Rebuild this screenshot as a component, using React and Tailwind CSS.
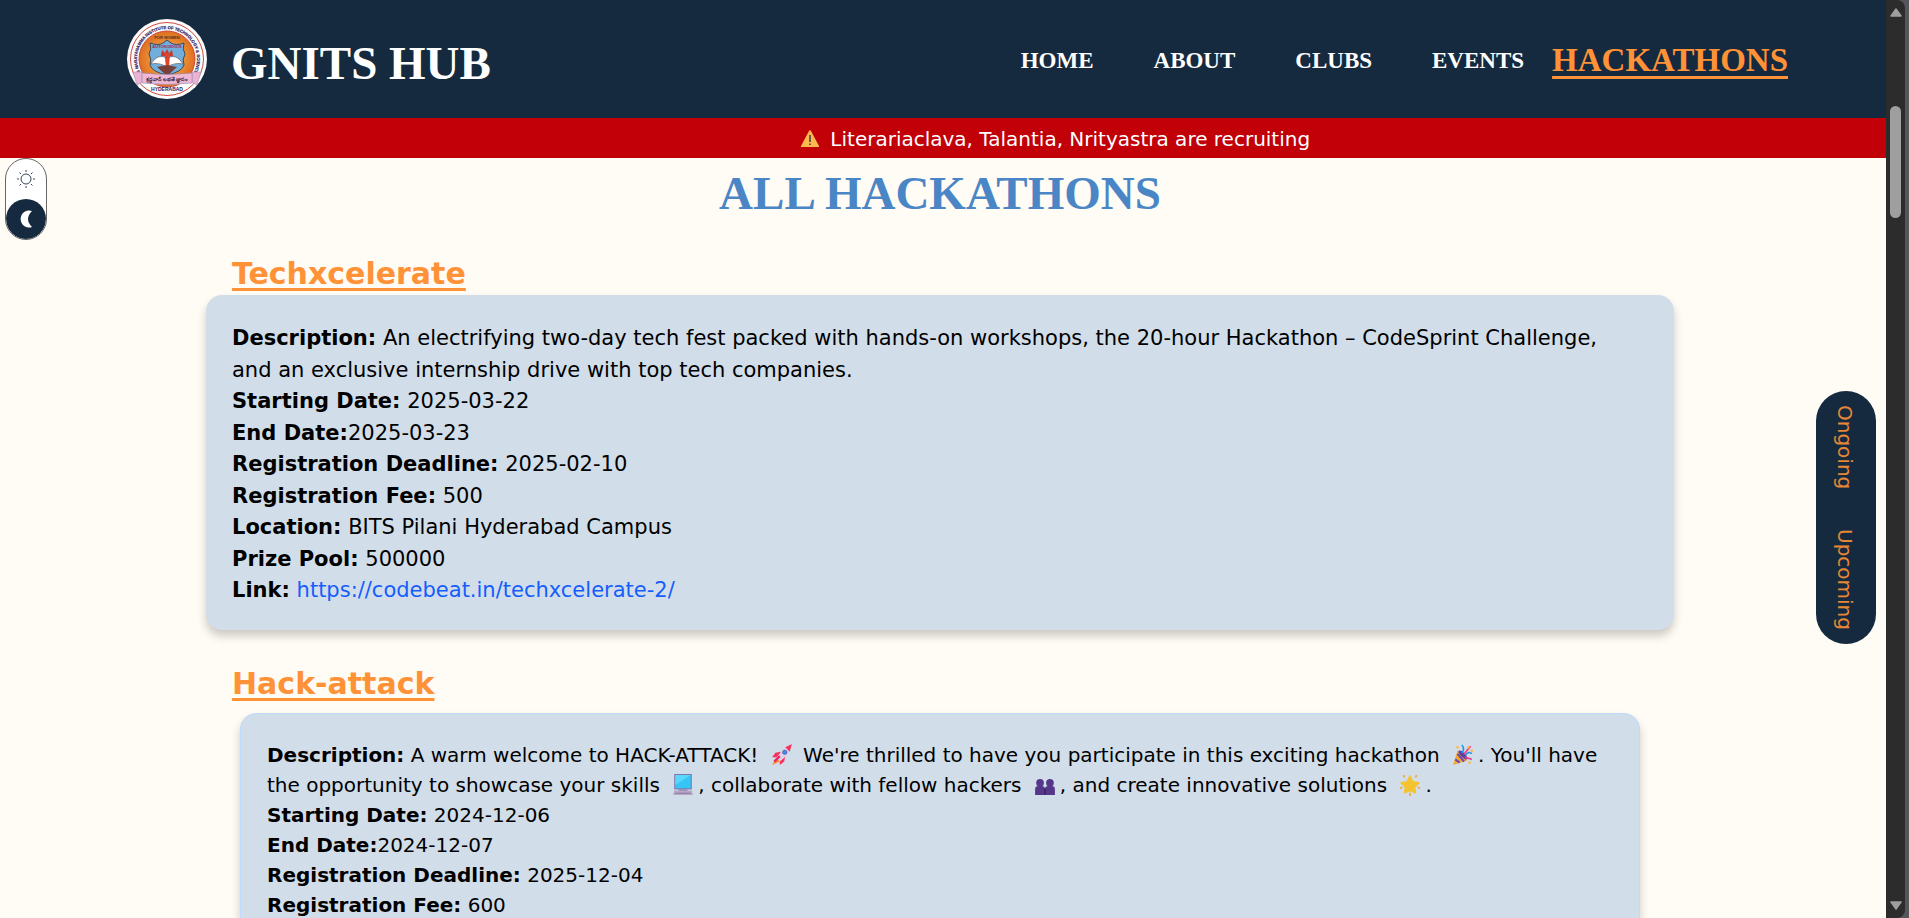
const verdana = "font-['DejaVu_Sans',sans-serif]";
const serif = "font-['Liberation_Serif',serif]";

function Crest() {
  return (
    <svg viewBox="0 0 80 80" className="size-20 shrink-0" role="img" aria-label="GNITS crest">
      <defs>
        <path id="ringTop" d="M14 55 A30 30 0 1 1 66 55" />
        <radialGradient id="core">
          <stop offset="0.500" stopColor="#f2963c" />
          <stop offset="1" stopColor="#dd6f1f" />
        </radialGradient>
      </defs>
      <circle cx="40" cy="40" r="40" fill="#fdfcfd" />
      <circle cx="40" cy="40" r="36.500" fill="none" stroke="#cf4a3e" />
      <circle cx="40" cy="40" r="28" fill="url(#core)" stroke="#cf4a3e" />
      <text fontSize="4.200" fontWeight="700" fill="#2f2160" stroke="#2f2160" strokeWidth="0.200" fontFamily="Liberation Sans Narrow, Liberation Sans, sans-serif">
        <textPath href="#ringTop" startOffset="50%" textAnchor="middle">G NARAYANAMMA INSTITUTE OF TECHNOLOGY &amp; SCIENCE</textPath>
      </text>
      <text x="40" y="20" fontSize="4" textAnchor="middle" fill="#4b3320" fontFamily="Liberation Sans, sans-serif">FOR WOMEN</text>
      <path d="M23 24 Q31 27 36 24 L40 21 L44 24 Q49 27 57 24 Q55 30 58 35 Q55 40 57 46 Q55 53 40 56 Q25 53 23 46 Q25 40 22 35 Q25 30 23 24Z" fill="#71aedb" stroke="#3b4a5c" />
      <text x="40" y="29" fontSize="4" fontWeight="700" textAnchor="middle" fill="#a12c4c" fontFamily="Liberation Sans, sans-serif">AUTONOMOUS</text>
      <path d="M34 37 35 31 38 34 40 30 42 34 45 31 46 37Z" fill="#c23a2b" />
      <path d="M24 45 Q30 34 40 39 Q50 34 56 45 Q48 43 40 48 Q32 43 24 45Z" fill="#fff" stroke="#564b50" strokeWidth="0.600" />
      <path d="M37.500 34H43L42 49H39Z" fill="#df432b" />
      <path d="M30 48 40 46 50 48 40 57Z" fill="#794039" />
      <path d="M6 53H15V63L10 66Z M74 53H65V63L70 66Z" fill="#edb1d2" stroke="#9d91b1" strokeWidth="0.600" />
      <path d="M15 54Q40 57 65 54V64Q40 67 15 64Z" fill="#f0b8d6" stroke="#8b8fb5" strokeWidth="0.600" />
      <text x="40" y="62" fontSize="5" fontWeight="700" textAnchor="middle" fill="#3d2635" fontFamily="Noto Sans, sans-serif">శ్రద్ధవాన్ లభతే జ్ఞానం</text>
      <text x="40" y="72" fontSize="5" fontWeight="700" textAnchor="middle" fill="#2f2160" fontFamily="Liberation Sans Narrow, Liberation Sans, sans-serif">HYDERABAD</text>
    </svg>
  );
}

function Emoji({ label, children }) {
  return (
    <svg viewBox="0 0 20 20" className="mr-1 ml-1.5 inline-block size-[22px] align-[-4px]" role="img" aria-label={label}>
      {children}
    </svg>
  );
}

const Warning = () => (
  <svg viewBox="0 0 20 20" className="mr-1 ml-0.5 inline-block size-5 align-[-3px]" role="img" aria-label="Warning">
    <path d="M10 1.500 Q10.500 1 11 2 L19 17 Q19.500 18 18.500 18H1.500Q.500 18 1 17L9 2Q9.500 1 10 1.500Z" fill="#ffb84d" />
    <path d="M10 6V13M10 14.500V16" stroke="#40384b" strokeWidth="1.500" />
  </svg>
);
const Rocket = () => (
  <Emoji label="Rocket">
    <path d="M9 7 4 8 1 12 7 12ZM13 11 12 16 8 19 8 13Z" fill="#f8315f" />
    <path d="M5 12 1 19 8 16Z" fill="#ff8c2e" />
    <path d="M18 1 12 4 5 12 8 16 16 9Z" fill="#dcd3e8" />
    <path d="M19 0 13 3 17 7Z" fill="#f8315f" />
    <circle cx="12.500" cy="7.500" r="2" fill="#3b8de8" stroke="#6352a3" strokeWidth="0.600" />
    <path d="M3 16 8 11" stroke="#ef2365" strokeWidth="2" />
  </Emoji>
);
const Popper = () => (
  <Emoji label="Party popper">
    <path d="M5 6 1 19 14 15Z" fill="#f6a928" />
    <path d="M5 9 11 16M3 14 7 17" stroke="#704ab8" strokeWidth="2" />
    <ellipse cx="10" cy="10" rx="2" ry="5.500" transform="rotate(-45 10 10)" fill="#62419a" />
    <path d="M9 8Q12 5 9 1M12 10Q16 6 18 9" fill="none" stroke="#2794ea" strokeWidth="1.500" />
    <path d="M11 9 17 2M12 12 18 14" stroke="#ef3e94" strokeWidth="1.500" />
    <path d="M4 2h2v2H4zM14 2h2v2h-2zM17 5h2v2h-2zM15 16h2v2h-2z" fill="#ffb82e" />
  </Emoji>
);
const Computer = () => (
  <Emoji label="Computer">
    <path d="M2 0H18V14H2Z" fill="#7e78ad" />
    <path d="M3 1H17V13H3Z" fill="#35c5f7" />
    <path d="M3 1H17L3 10Z" fill="#5ad7fb" />
    <path d="M6 14H14V16H6Z" fill="#8c7ca5" />
    <path d="M2 15H18L19 19H1Z" fill="#b6a8c8" />
    <path d="M3 17.500H17" stroke="#8c7ca5" />
  </Emoji>
);
const People = () => (
  <Emoji label="People">
    <g fill="#56368a">
      <circle cx="5.500" cy="8" r="3.500" />
      <circle cx="14.500" cy="8" r="3.500" />
      <path d="M1 19V14Q1 11 4 11H7Q10 11 10 14Q10 11 13 11H16Q19 11 19 14V19Z" />
    </g>
    <path d="M10 13V19" stroke="#31204f" />
  </Emoji>
);
const Star = () => (
  <Emoji label="Glowing star">
    <path d="M10 2 12.500 7 18 8 14 12 15 17 10 15 5 17 6 12 2 8 7.500 7Z" fill="#f4c430" stroke="#f4c430" strokeWidth="1.500" strokeLinejoin="round" />
    <path d="M4 1 5 3M16 1 15 3M1 13 3 12M19 13 17 12M10 17V20" stroke="#f1a62d" strokeWidth="1.500" />
  </Emoji>
);

const NAV = ["HOME", "ABOUT", "CLUBS", "EVENTS"];

function Field({ label, tight, children }) {
  return (
    <p>
      <strong>{label}:</strong>
      {tight ? "" : " "}
      {children}
    </p>
  );
}

function ScrollRail() {
  return (
    <div className="flex w-[23px] shrink-0 bg-[#56565a] pr-1" aria-hidden="true">
      <div className="flex grow flex-col items-center justify-between rounded-r-lg bg-[#2c2c2c] py-2">
        <svg viewBox="0 0 12 9" className="h-[9px] w-3"><path d="M6 1 11 8H1Z" fill="#9f9f9f" stroke="#9f9f9f" strokeWidth="1.500" strokeLinejoin="round" /></svg>
        <div className="mt-[89px] mb-auto h-28 w-[11px] rounded-full bg-[#9f9f9f]" />
        <svg viewBox="0 0 12 9" className="h-[9px] w-3"><path d="M1 1H11L6 8Z" fill="#9f9f9f" stroke="#9f9f9f" strokeWidth="1.500" strokeLinejoin="round" /></svg>
      </div>
    </div>
  );
}

export default function App() {
  return (
    <div className={`flex h-screen overflow-hidden bg-[#fffbf5] text-black ${verdana}`}>
      <div className="relative min-w-0 grow overflow-hidden">
        <header className={`flex h-[118px] items-center justify-between bg-[#162a3f] pr-[98px] pl-[127px] font-bold text-white ${serif}`}>
          <div className="flex items-start gap-6">
            <Crest />
            <span className="pt-3.5 text-[47px] leading-[60px]">GNITS HUB</span>
          </div>
          <nav className="flex items-center pt-1 text-[23px]">
            <div className="mr-7 flex gap-[60px]">
              {NAV.map((item) => (
                <a key={item} href={`#${item.toLowerCase()}`}>{item}</a>
              ))}
            </div>
            <a href="#hackathons" className="text-[33px] text-[#ff9237] underline decoration-[3px] underline-offset-[5px]">HACKATHONS</a>
          </nav>
        </header>

        <div className="flex h-10 items-center bg-[#c10007] pt-0.5 pl-[798px] text-xl whitespace-pre text-white">
          <p><Warning /> Literariaclava, Talantia, Nrityastra are recruiting</p>
        </div>

        <button aria-label="Toggle colour theme" className="absolute top-[158px] left-[5px] flex h-[82px] w-[42px] flex-col items-center justify-between overflow-hidden rounded-full border border-[#666] bg-white">
          <span className="flex size-10 items-center justify-center">
            <svg viewBox="0 0 18 18" className="size-[18px]" fill="none" stroke="#33445a">
              <circle cx="9" cy="9" r="5" />
              <path d="M9 0V2M9 16V18M0 9H2M16 9H18M2.500 2.500 4 4M14 14 15.500 15.500M2.500 15.500 4 14M14 4 15.500 2.500" />
            </svg>
          </span>
          <span className="flex size-10 items-center justify-center rounded-full bg-[#162a3f]">
            <svg viewBox="0 0 14 18" className="h-[18px] w-3.5"><path d="M13 1Q5 9 13 17A8.500 8.500 0 1 1 13 1Z" fill="#fff" /></svg>
          </span>
        </button>

        <main className="pr-[212px] pl-[206px]">
          <h1 className={`pt-1 text-center text-[47px] leading-[62px] font-bold text-[#4a86c5] ${serif}`}>ALL HACKATHONS</h1>

          <section className="mt-7">
            <h2 className="ml-[26px] text-3xl leading-[43px] font-bold text-[#ff9237] underline decoration-[3px] underline-offset-4">Techxcelerate</h2>
            <article className="rounded-2xl bg-[#d1dde9] pt-7 pr-9 pb-[23px] pl-[26px] text-[21px] leading-normal shadow-[0_6px_10px_rgba(0,0,0,0.2)]">
              <Field label="Description">
                An electrifying two-day tech fest packed with hands-on workshops, the 20-hour Hackathon – CodeSprint Challenge, and an exclusive internship drive with top tech companies.
              </Field>
              <Field label="Starting Date">2025-03-22</Field>
              <Field label="End Date" tight>2025-03-23</Field>
              <Field label="Registration Deadline">2025-02-10</Field>
              <Field label="Registration Fee">500</Field>
              <Field label="Location">BITS Pilani Hyderabad Campus</Field>
              <Field label="Prize Pool">500000</Field>
              <Field label="Link"><a href="https://codebeat.in/techxcelerate-2/" className="text-[#155dfc]">https://codebeat.in/techxcelerate-2/</a></Field>
            </article>
          </section>

          <section className="mt-8">
            <h2 className="ml-[26px] text-3xl leading-[43px] font-bold text-[#ff9237] underline decoration-[3px] underline-offset-4">Hack-attack</h2>
            <article className="mx-[34px] mt-2 rounded-2xl border border-[#bedbff] bg-[#d1dde9] px-[26px] py-[26px] text-xl leading-normal shadow-[0_6px_10px_rgba(0,0,0,0.2)]">
              <Field label="Description">
                A warm welcome to HACK-ATTACK! <Rocket /> We're thrilled to have you participate in this exciting hackathon <Popper />. You'll have the opportunity to showcase your skills <Computer />, collaborate with fellow hackers <People />, and create innovative solutions <Star />.
              </Field>
              <Field label="Starting Date">2024-12-06</Field>
              <Field label="End Date" tight>2024-12-07</Field>
              <Field label="Registration Deadline">2025-12-04</Field>
              <Field label="Registration Fee">600</Field>
            </article>
          </section>
        </main>

        <aside className="absolute top-[391px] right-[10px] flex h-[253px] w-[60px] flex-col items-center justify-between rounded-full bg-[#162a3f] py-3.5 pr-0.5 text-xl text-[#e68735]">
          <button className="[writing-mode:vertical-rl]">Ongoing</button>
          <button className="[writing-mode:vertical-rl]">Upcoming</button>
        </aside>
      </div>
      <ScrollRail />
    </div>
  );
}
